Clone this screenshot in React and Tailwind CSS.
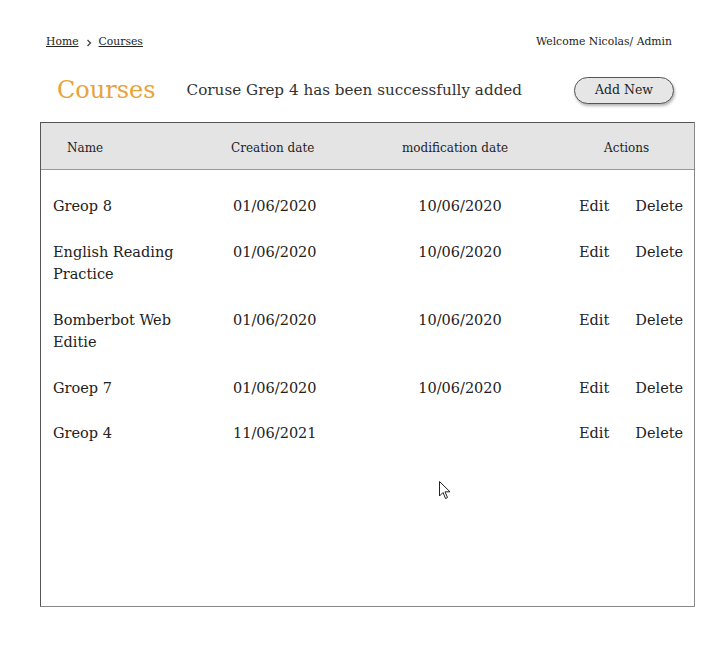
const courses = [
  { name: "Greop 8", created: "01/06/2020", modified: "10/06/2020" },
  { name: "English Reading Practice", created: "01/06/2020", modified: "10/06/2020" },
  { name: "Bomberbot Web Editie", created: "01/06/2020", modified: "10/06/2020" },
  { name: "Groep 7", created: "01/06/2020", modified: "10/06/2020" },
  { name: "Greop 4", created: "11/06/2021", modified: "" },
];

const cols = "grid grid-cols-[180px_167px_120px_1fr]";

function Cursor() {
  return (
    <svg
      className="absolute left-[439px] top-[481px]"
      width="12"
      height="19"
      viewBox="0 0 12 19"
    >
      <path
        d="M0.5 0.5 L0.5 15 L4 11.5 L6.5 17.5 L8.5 16.6 L6 10.8 L11 10.8 Z"
        fill="#fff"
        stroke="#222"
        strokeWidth="1"
        strokeLinejoin="round"
      />
    </svg>
  );
}

export default function App() {
  return (
    <div
      className="relative w-[722px] h-[647px] bg-white text-[#222]"
      style={{ fontFamily: '"DejaVu Serif", "Liberation Serif", serif' }}
    >
      {/* Top bar */}
      <div className="flex items-center justify-between pl-[46px] pr-[50px] pt-[34px] text-[10.8px]">
        <div className="flex items-center gap-[6px]">
          <span className="underline">Home</span>
          <svg width="8" height="8" viewBox="0 0 8 8" className="mt-[1px]">
            <path d="M2.5 1 L5.5 4 L2.5 7" fill="none" stroke="#444" strokeWidth="1.3" />
          </svg>
          <span className="underline">Courses</span>
        </div>
        <span>Welcome Nicolas/ Admin</span>
      </div>

      {/* Title row */}
      <div className="flex items-center pl-[57px] pr-[48px] mt-[25px] h-[30px]">
        <h1 className="text-[24px] text-[#e8a33a] leading-none">Courses</h1>
        <p className="ml-[31px] text-[15.2px] text-[#333]">
          Coruse Grep 4 has been successfully added
        </p>
        <button className="ml-auto w-[100px] h-[27px] rounded-full border border-[#555] bg-[#e6e6e6] text-[12.5px] shadow-[1px_2px_3px_rgba(0,0,0,0.3)]">
          Add New
        </button>
      </div>

      {/* Table */}
      <div className="mx-[40px] mt-[17px] w-[655px] h-[485px] border border-l-[#555] border-t-[#555] border-r-[#888] border-b-[#888]">
        <div className={`${cols} h-[47px] items-center bg-[#e4e4e4] border-b border-[#999] pl-[12px] pt-[3px] text-[12px]`}>
          <span className="pl-[14px]">Name</span>
          <span className="-ml-[2px]">Creation date</span>
          <span className="text-center -ml-[10px] whitespace-nowrap">modification date</span>
          <span className="pl-[84px]">Actions</span>
        </div>
        <div className="flex flex-col gap-[23px] pt-[25px] pl-[12px] text-[14.5px] leading-[22.5px]">
          {courses.map((c) => (
            <div key={c.name} className={cols}>
              <span className="pr-[20px]">{c.name}</span>
              <span>{c.created}</span>
              <span className="text-center">{c.modified}</span>
              <div className="flex gap-[26px] pl-[59px]">
                <span>Edit</span>
                <span>Delete</span>
              </div>
            </div>
          ))}
        </div>
      </div>

      <Cursor />
    </div>
  );
}
